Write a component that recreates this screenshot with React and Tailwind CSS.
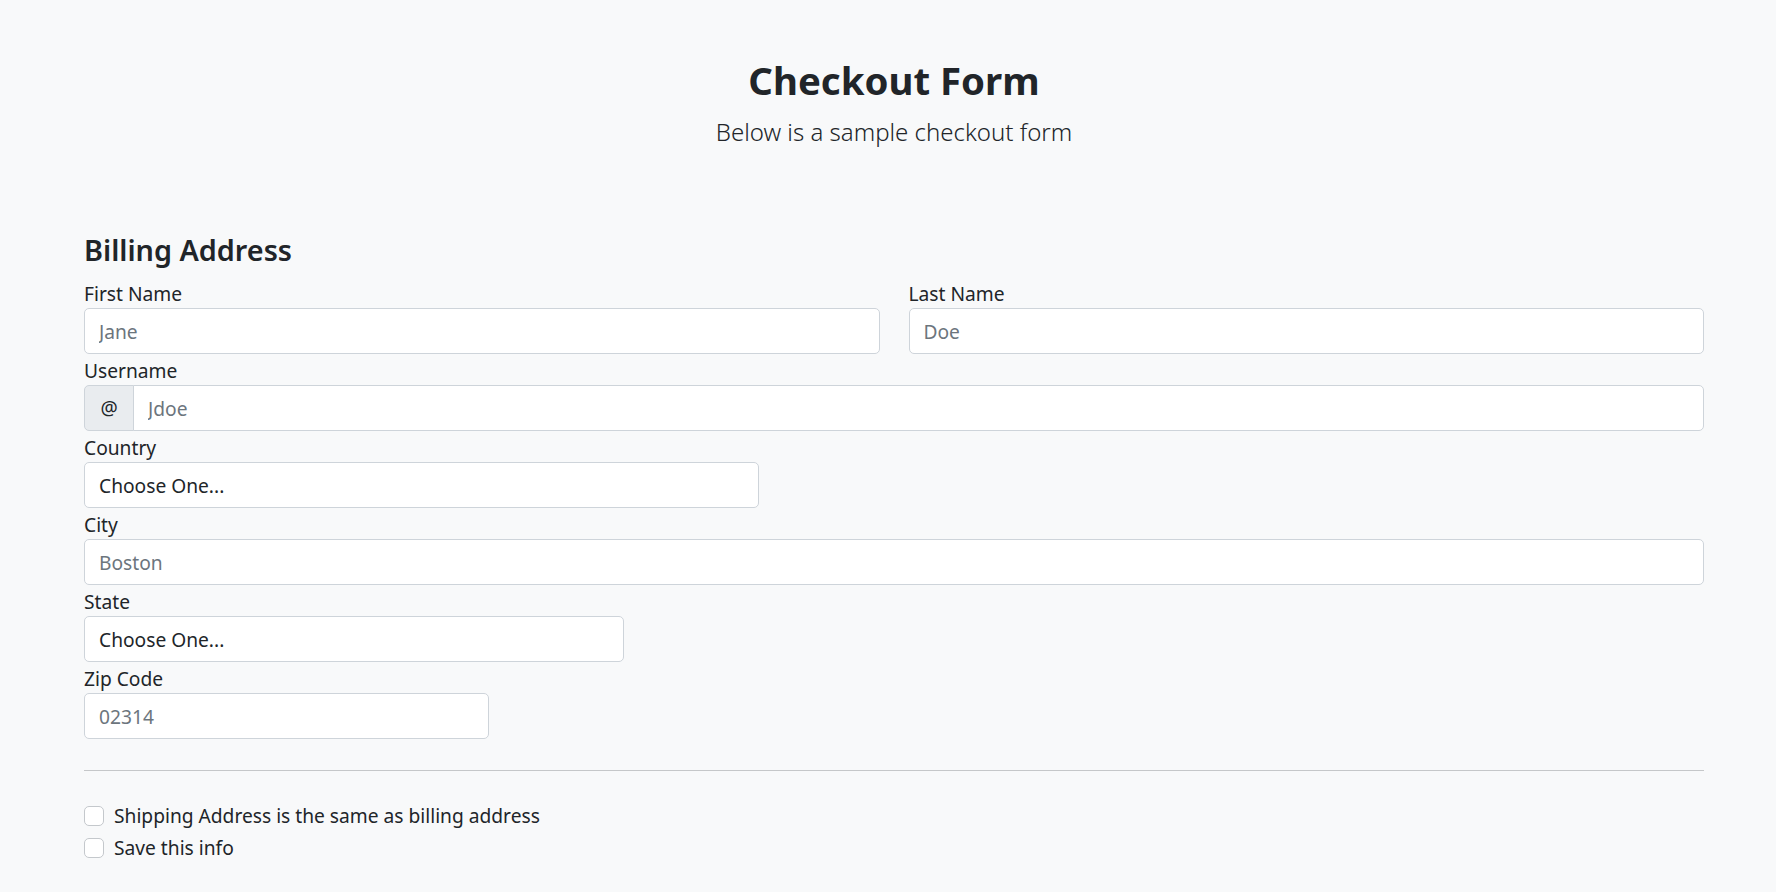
import { useState } from "react"

const font = { fontFamily: "'Noto Sans', 'Open Sans', sans-serif" }

function Field({ label, children, className = "" }) {
  return (
    <div className={`flex flex-col ${className}`}>
      <label className="h-[29px] leading-[29px] text-[19.2px] text-[#212529]">
        {label}
      </label>
      {children}
    </div>
  )
}

function TextInput({ placeholder }) {
  return (
    <input
      type="text"
      placeholder={placeholder}
      className="h-[46px] w-full rounded-[5px] border border-[#ced4da] bg-white px-[14px] text-[19.2px] leading-[29px] text-[#212529] placeholder:text-[#6c757d] outline-none"
    />
  )
}

function Select() {
  return (
    <select className="h-[46px] w-full appearance-none rounded-[5px] border border-[#ced4da] bg-white px-[14px] text-[19.2px] leading-[29px] text-[#212529] outline-none">
      <option>Choose One...</option>
    </select>
  )
}

function Check({ label }) {
  const [checked, setChecked] = useState(false)
  return (
    <label className="flex h-[29px] items-center text-[19.2px] leading-[29px] text-[#212529]">
      <input
        type="checkbox"
        checked={checked}
        onChange={() => setChecked(!checked)}
        className="h-[20px] w-[20px] appearance-none rounded-[5px] border border-[#c4c8cc] bg-white checked:bg-[#0d6efd]"
      />
      <span className="ml-[10px]">{label}</span>
    </label>
  )
}

export default function App() {
  return (
    <div className="min-h-screen bg-[#f8f9fa] pl-[84px] pr-[72px] text-[#212529]" style={font}>
      {/* HEADER */}
      <div className="pt-[57px] text-center">
        <h2 className="text-[38.4px] font-bold leading-[46px]">Checkout Form</h2>
        <p className="mt-[11px] text-[24px] font-light leading-[36px] text-[#212529]">
          Below is a sample checkout form
        </p>
      </div>

      {/* FORM */}
      <div className="mt-[82px] pb-[40px]">
        <h4 className="mb-[12px] text-[28.8px] font-semibold leading-[35px]">
          Billing Address
        </h4>

        <div className="flex flex-col gap-[2px]">
          <div className="flex gap-[29px]">
            <Field label="First Name" className="flex-1">
              <TextInput placeholder="Jane" />
            </Field>
            <Field label="Last Name" className="flex-1">
              <TextInput placeholder="Doe" />
            </Field>
          </div>

          <Field label="Username">
            <div className="flex h-[46px]">
              <span className="flex w-[50px] items-center justify-center rounded-l-[5px] border border-[#ced4da] bg-[#e9ecef] text-[19.2px]">
                @
              </span>
              <input
                type="text"
                placeholder="Jdoe"
                className="-ml-px h-[46px] flex-1 rounded-r-[5px] border border-[#ced4da] bg-white px-[14px] text-[19.2px] text-[#212529] placeholder:text-[#6c757d] outline-none"
              />
            </div>
          </Field>

          <Field label="Country" className="w-5/12">
            <Select />
          </Field>

          <Field label="City">
            <TextInput placeholder="Boston" />
          </Field>

          <Field label="State" className="w-1/3">
            <Select />
          </Field>

          <Field label="Zip Code" className="w-1/4">
            <TextInput placeholder="02314" />
          </Field>
        </div>

        <hr className="mt-[31px] border-t border-[#c5c7c9]" />

        <div className="mt-[30px] flex flex-col gap-[3px]">
          <Check label="Shipping Address is the same as billing address" />
          <Check label="Save this info" />
        </div>
      </div>
    </div>
  )
}
